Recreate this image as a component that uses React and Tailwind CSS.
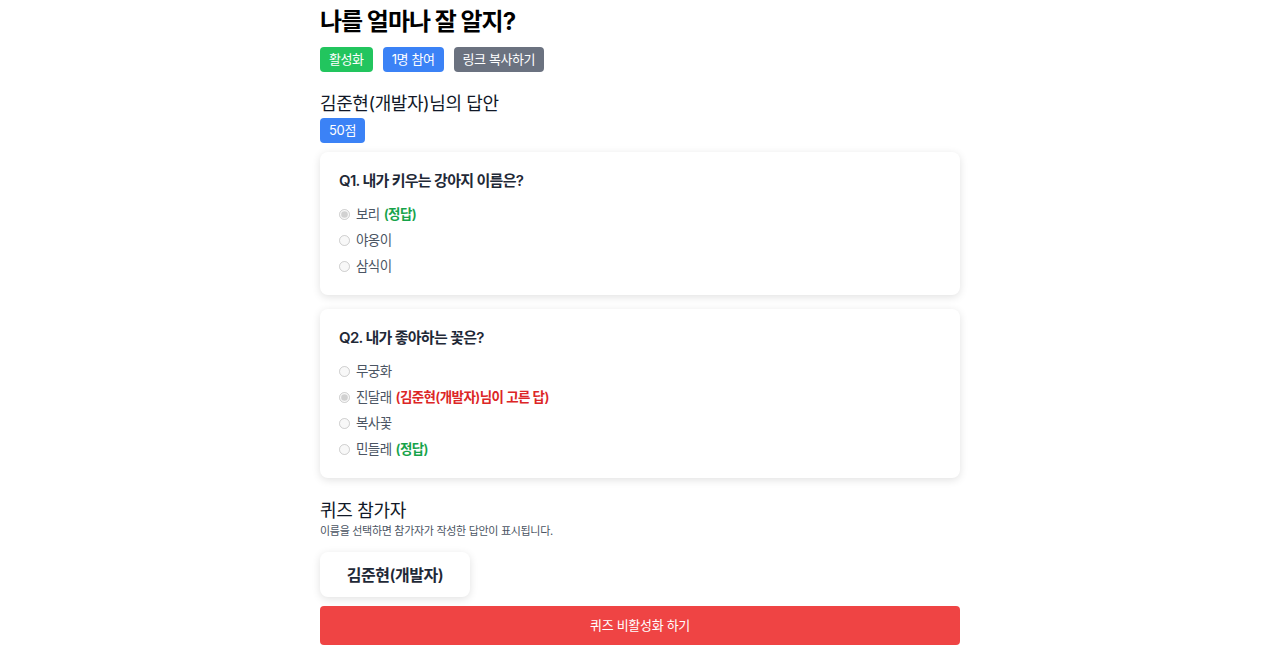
import React from "react";

const font = { fontFamily: 'Inter, "Noto Sans CJK KR", sans-serif' };

function Option({ label, extra, extraClass, checked }) {
  return (
    <label className="flex items-center h-[26px] text-[13.5px] tracking-[-0.6px] text-[#4b5563]">
      <input type="radio" disabled checked={checked} readOnly className="w-[11px] h-[11px] m-0 mr-[6px]" />
      <span>{label}</span>
      {extra && <span className={"ml-1 font-semibold " + extraClass}>{extra}</span>}
    </label>
  );
}

function Card({ title, children }) {
  return (
    <div className="bg-white rounded-lg shadow-[0_2px_8px_rgba(0,0,0,0.12)] px-[19px] pt-[17px] pb-[16px]">
      <div className="text-[15px] font-semibold text-[#1f2937] leading-6 mb-[8px] tracking-[-0.7px]">{title}</div>
      <div className="flex flex-col">{children}</div>
    </div>
  );
}

export default function App() {
  return (
    <div className="min-h-screen bg-white" style={font}>
      <div className="w-[640px] mx-auto pt-1 pb-4">
        <h1 className="text-[24px] leading-9 font-bold text-black tracking-[-1px]">나를 얼마나 잘 알지?</h1>
        <div className="flex gap-[10px] mt-[7px]">
          <span className="h-[25px] px-[9px] flex items-center rounded bg-[#22c55e] text-white text-[13px] tracking-[-0.4px]">활성화</span>
          <span className="h-[25px] px-[9px] flex items-center rounded bg-[#3b82f6] text-white text-[13px] tracking-[-0.4px]">1명 참여</span>
          <span className="h-[25px] px-[9px] flex items-center rounded bg-[#6b7280] text-white text-[13px] tracking-[-0.4px]">링크 복사하기</span>
        </div>
        <h2 className="text-[18px] leading-7 mt-[18px] text-[#111827] tracking-[-0.4px]">김준현(개발자)님의 답안</h2>
        <div className="flex w-fit h-[25px] px-[9px] items-center rounded bg-[#3b82f6] text-white text-[13px] tracking-[-0.3px]">50점</div>
        <div className="mt-[9px] flex flex-col gap-[14px]">
          <Card title="Q1. 내가 키우는 강아지 이름은?">
            <Option label="보리" checked extra="(정답)" extraClass="text-[#16a34a]" />
            <Option label="야옹이" />
            <Option label="삼식이" />
          </Card>
          <Card title="Q2. 내가 좋아하는 꽃은?">
            <Option label="무궁화" />
            <Option label="진달래" checked extra="(김준현(개발자)님이 고른 답)" extraClass="text-[#dc2626]" />
            <Option label="복사꽃" />
            <Option label="민들레" extra="(정답)" extraClass="text-[#16a34a]" />
          </Card>
        </div>
        <h2 className="text-[18px] leading-6 mt-[21px] text-[#111827] tracking-[-0.3px]">퀴즈 참가자</h2>
        <p className="text-[11px] leading-4 text-[#4b5563] tracking-[-0.3px]">이름을 선택하면 참가자가 작성한 답안이 표시됩니다.</p>
        <div className="mt-[13px] w-[150px] h-[45px] bg-white rounded-lg shadow-[0_2px_8px_rgba(0,0,0,0.12)] flex items-center justify-center text-[16px] font-semibold text-[#1f2937] tracking-[-0.5px]">
          김준현(개발자)
        </div>
        <button className="mt-[9px] w-full h-[39px] rounded bg-[#ef4444] text-white text-[13px] tracking-[-0.3px] flex items-center justify-center">
          퀴즈 비활성화 하기
        </button>
      </div>
    </div>
  );
}
